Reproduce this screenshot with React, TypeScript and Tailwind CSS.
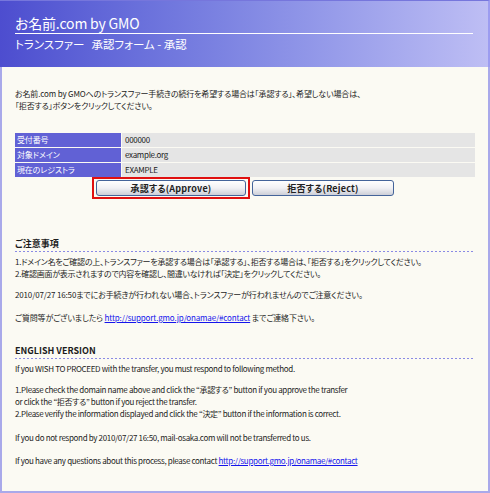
import React from "react"

const rows = [
  ["受付番号", "000000"],
  ["対象ドメイン", "example.org"],
  ["現在のレジストラ", "EXAMPLE"],
]

function Dots() {
  return <div className="mt-px h-px w-full bg-[linear-gradient(to_right,#8a8ae4_50%,transparent_50%)] bg-[length:4px_1px] bg-repeat-x" />
}

function Btn({ label, w }: { label: string; w: string }) {
  return (
    <button
      className={`${w} flex h-[16px] items-center justify-center rounded-[3px] border border-[#44649a] bg-linear-to-b from-white via-[#f1f1f4] to-[#cdcfd8] text-[9px] font-bold leading-none tracking-[0.2px] text-[#222]`}
    >
      {label}
    </button>
  )
}

export default function App() {
  return (
    <div className="h-[493px] w-[490px] overflow-hidden bg-[#fbfaf3] font-['Noto_Sans_CJK_JP',sans-serif] text-[#1c1c1c] [font-feature-settings:'palt']">
      <header className="h-[67px] border-t border-r-2 border-t-[#7676dc] border-r-[#9c9cf0] bg-linear-to-r from-[#4d4dcf] to-[#bebef4] pt-[13px]">
        <div className="pl-[15px] text-[14px] leading-[18px] tracking-[-0.2px] text-white">お名前.com by GMO</div>
        <div className="mx-[15px] mt-px h-px bg-white" />
        <div className="mt-[3px] pl-[15px] text-[11.5px] leading-[14px] text-white">
          トランスファー<span className="ml-[7px]">承認フォーム - 承認</span>
        </div>
      </header>

      <main className="h-[426px] border-x-2 border-b-2 border-[#a9a9ea] px-[13px] pt-[21px] text-[8px] leading-[12px] tracking-[-0.15px]">
        <p>
          お名前.com by GMOへのトランスファー手続きの続行を希望する場合は「承認する」、希望しない場合は、
          <br />
          「拒否する」ボタンをクリックしてください。
        </p>

        <div className="mt-[21px] grid grid-cols-[106px_1fr] gap-px text-[8px] leading-[14px]">
          {rows.map(([k, v]) => (
            <React.Fragment key={k}>
              <div className="h-[14px] bg-[#6161d5] pl-[2px] text-white">{k}</div>
              <div className="h-[14px] bg-[#e5e5e5] pl-[3px] tracking-[-0.3px]">{v}</div>
            </React.Fragment>
          ))}
        </div>

        <div className="flex items-center pl-[77px]">
          <div className="border-2 border-[#e01010] px-[2px] py-px">
            <Btn label="承認する(Approve)" w="w-[150px]" />
          </div>
          <div className="ml-[2px]">
            <Btn label="拒否する(Reject)" w="w-[142px]" />
          </div>
        </div>

        <h3 className="mt-[39px] text-[9px] font-bold leading-[12px] tracking-normal">ご注意事項</h3>
        <Dots />
        <p className="mt-[4px] tracking-[-0.25px]">
          1.ドメイン名をご確認の上、トランスファーを承認する場合は「承認する」、拒否する場合は、「拒否する」をクリックしてください。
          <br />
          2.確認画面が表示されますので内容を確認し、間違いなければ「決定」をクリックしてください。
        </p>
        <p className="mt-[9px]">2010/07/27 16:50までにお手続きが行われない場合、トランスファーが行われませんのでご注意ください。</p>
        <p className="mt-[11px]">
          ご質問等がございましたら{" "}
          <a href="#" className="text-[#1414ec] underline">
            http://support.gmo.jp/onamae/#contact
          </a>{" "}
          までご連絡下さい。
        </p>

        <h3 className="mt-[21px] text-[9px] font-bold leading-[12px] tracking-normal">ENGLISH VERSION</h3>
        <Dots />
        <div className="tracking-[-0.33px]">
          <p className="mt-[4px]">If you WISH TO PROCEED with the transfer, you must respond to following method.</p>
          <p className="mt-[9px]">
            1.Please check the domain name above and click the “承認する” button if you approve the transfer
            <br />
            or click the “拒否する” button if you reject the transfer.
            <br />
            2.Please verify the information displayed and click the “決定” button if the information is correct.
          </p>
          <p className="mt-[12px]">If you do not respond by 2010/07/27 16:50, mail-osaka.com will not be transferred to us.</p>
          <p className="mt-[11px]">
            If you have any questions about this process, please contact{" "}
            <a href="#" className="text-[#1414ec] underline">
              http://support.gmo.jp/onamae/#contact
            </a>
          </p>
        </div>
      </main>
    </div>
  )
}
